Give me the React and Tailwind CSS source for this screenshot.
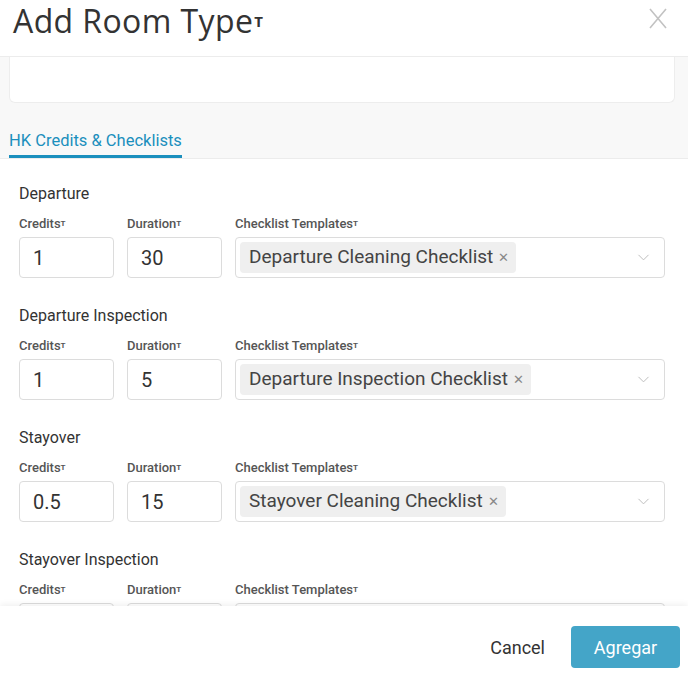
import { ChevronDown } from "lucide-react";

const sections = [
  { title: "Departure", credits: "1", duration: "30", template: "Departure Cleaning Checklist" },
  { title: "Departure Inspection", credits: "1", duration: "5", template: "Departure Inspection Checklist" },
  { title: "Stayover", credits: "0.5", duration: "15", template: "Stayover Cleaning Checklist" },
  { title: "Stayover Inspection", credits: "", duration: "", template: "" },
];

const T = () => <sup className="text-[8px] font-bold relative -top-[2px]">T</sup>;

function Label({ children }) {
  return (
    <div className="h-[18px] leading-[18px] text-[13px] font-medium text-[#555] mb-[4px]">
      {children}
      <T />
    </div>
  );
}

function Section({ title, credits, duration, template }) {
  return (
    <div className="pb-[26px]">
      <div className="h-[24px] leading-[24px] text-[16px] text-[#333] mb-[9px]">{title}</div>
      <div className="flex gap-[13px]">
        <div className="w-[95px] shrink-0">
          <Label>Credits</Label>
          <div className="h-[41px] border border-[#dcdcdc] rounded-[4px] bg-white pl-[13px] flex items-center text-[20px] text-[#333]">
            {credits}
          </div>
        </div>
        <div className="w-[95px] shrink-0">
          <Label>Duration</Label>
          <div className="h-[41px] border border-[#dcdcdc] rounded-[4px] bg-white pl-[13px] flex items-center text-[20px] text-[#333]">
            {duration}
          </div>
        </div>
        <div className="flex-1">
          <Label>Checklist Templates</Label>
          <div className="h-[41px] border border-[#dcdcdc] rounded-[4px] bg-white pl-[4px] pr-[11px] flex items-center justify-between">
            {template ? (
              <div className="h-[31px] bg-[#efefef] rounded-[4px] pl-[9px] pr-[7px] flex items-center text-[19px] text-[#444]">
                {template}
                <span className="ml-[5px] text-[13px] text-[#888]">✕</span>
              </div>
            ) : (
              <div />
            )}
            <ChevronDown className="w-[19px] h-[19px] text-[#bbb]" strokeWidth={1.2} />
          </div>
        </div>
      </div>
    </div>
  );
}

export default function App() {
  return (
    <div className="h-[679px] w-[688px] flex flex-col overflow-hidden bg-white" style={{ fontFamily: "Roboto, 'Liberation Sans', sans-serif" }}>
      <div className="h-[57px] shrink-0 flex items-start justify-between border-b border-[#ececec] bg-white">
        <h1
          className="pl-[13px] pt-[1px] text-[32px] leading-[40px] text-[#333] tracking-[0.4px]"
          style={{ fontFamily: "'Open Sans', sans-serif" }}
        >
          Add Room Type
          <sup className="text-[15px] font-bold relative -top-[6px] ml-[1px]">T</sup>
        </h1>
        <svg className="mt-[8px] mr-[20px]" width="20" height="21" viewBox="0 0 20 21">
          <path d="M2 1 L18 20 M18 1 L2 20" stroke="#c2c2c2" strokeWidth="1.6" fill="none" />
        </svg>
      </div>
      <div className="flex-1 flex flex-col bg-[#f8f8f8] min-h-0">
        <div className="ml-[9px] mr-[13px] h-[46px] bg-white border border-t-0 border-[#ededed] rounded-b-[6px]" />
        <div className="mt-[26px] border-b border-[#ececec] px-[9px]">
          <div className="inline-block text-[16.5px] leading-[24px] text-[#1b8fbd] pb-[2px] border-b-[3px] border-[#1b8fbd]">
            HK Credits &amp; Checklists
          </div>
        </div>
        <div className="flex-1 min-h-0 overflow-hidden bg-white pl-[19px] pr-[23px] pt-[23px]">
          {sections.map((s) => (
            <Section key={s.title} {...s} />
          ))}
        </div>
      </div>
      <div className="h-[73px] shrink-0 bg-white flex items-start pt-[20px] justify-end gap-[26px] pr-[8px] shadow-[0_-2px_6px_rgba(0,0,0,0.06)] relative">
        <button className="h-[42px] text-[18px] text-[#333]">Cancel</button>
        <button className="w-[109px] h-[42px] rounded-[4px] bg-[#44a5c8] text-white text-[18px]">Agregar</button>
      </div>
    </div>
  );
}
